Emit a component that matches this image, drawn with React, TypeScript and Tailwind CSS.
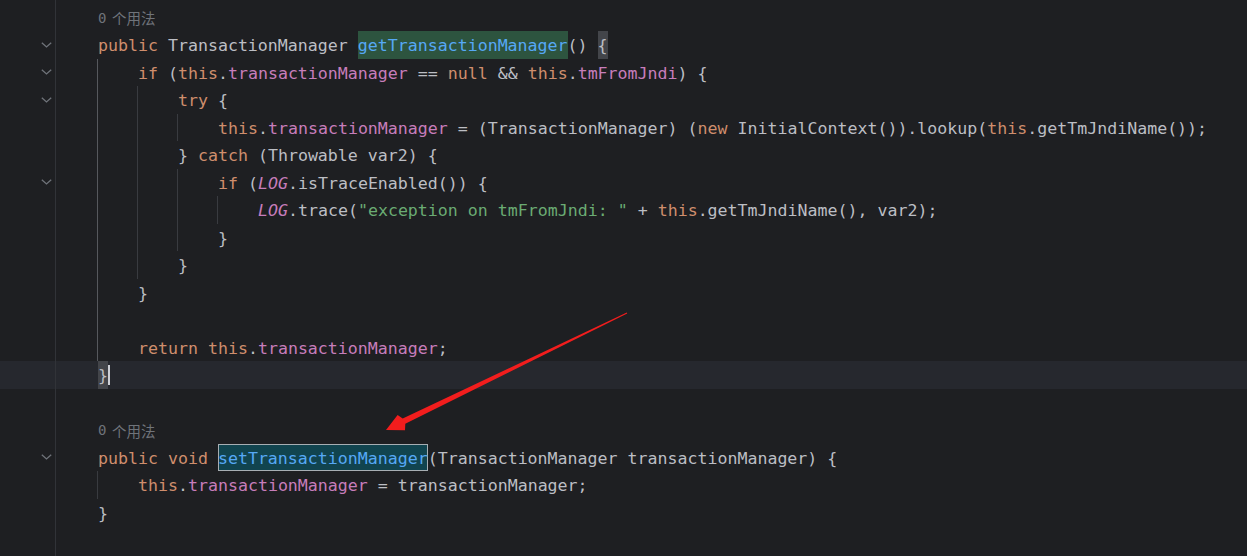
import React from "react";

type Tok = { t: string; c?: string };

interface Line {
  kind?: "hint" | "code";
  fold?: boolean;
  indent?: number;
  guides?: number[];
  bright?: boolean;
  current?: boolean;
  toks?: Tok[];
}

const KW = "text-[#cf8e6d]";
const FIELD = "text-[#c77dbb]";
const STATIC = "text-[#c77dbb] italic";
const STR = "text-[#6aab73]";

const k = (t: string): Tok => ({ t, c: KW });
const f = (t: string): Tok => ({ t, c: FIELD });
const d = (t: string): Tok => ({ t });

const lines: Line[] = [
  { kind: "hint" },
  {
    fold: true,
    toks: [
      k("public"),
      d(" TransactionManager "),
      { t: "getTransactionManager", c: "green" },
      d("() "),
      { t: "{", c: "brace" },
    ],
  },
  {
    fold: true,
    indent: 1,
    guides: [0],
    bright: true,
    toks: [
      k("if"),
      d(" ("),
      k("this"),
      d("."),
      f("transactionManager"),
      d(" == "),
      k("null"),
      d(" && "),
      k("this"),
      d("."),
      f("tmFromJndi"),
      d(") {"),
    ],
  },
  { fold: true, indent: 2, guides: [0, 1], bright: true, toks: [k("try"), d(" {")] },
  {
    indent: 3,
    guides: [0, 1, 2],
    bright: true,
    toks: [
      k("this"),
      d("."),
      f("transactionManager"),
      d(" = (TransactionManager) ("),
      k("new"),
      d(" InitialContext()).lookup("),
      k("this"),
      d(".getTmJndiName());"),
    ],
  },
  {
    indent: 2,
    guides: [0, 1],
    bright: true,
    toks: [d("} "), k("catch"), d(" (Throwable var2) {")],
  },
  {
    fold: true,
    indent: 3,
    guides: [0, 1, 2],
    bright: true,
    toks: [k("if"), d(" ("), { t: "LOG", c: STATIC }, d(".isTraceEnabled()) {")],
  },
  {
    indent: 4,
    guides: [0, 1, 2, 3],
    bright: true,
    toks: [
      { t: "LOG", c: STATIC },
      d(".trace("),
      { t: '"exception on tmFromJndi: "', c: STR },
      d(" + "),
      k("this"),
      d(".getTmJndiName(), var2);"),
    ],
  },
  { indent: 3, guides: [0, 1, 2], bright: true, toks: [d("}")] },
  { indent: 2, guides: [0, 1], bright: true, toks: [d("}")] },
  { indent: 1, guides: [0], bright: true, toks: [d("}")] },
  { indent: 1, guides: [0], bright: true, toks: [] },
  {
    indent: 1,
    guides: [0],
    bright: true,
    toks: [k("return"), d(" "), k("this"), d("."), f("transactionManager"), d(";")],
  },
  { current: true, toks: [{ t: "}", c: "caret" }] },
  { toks: [] },
  { kind: "hint" },
  {
    fold: true,
    toks: [
      k("public"),
      d(" "),
      k("void"),
      d(" "),
      { t: "setTransactionManager", c: "teal" },
      d("(TransactionManager transactionManager) {"),
    ],
  },
  {
    indent: 1,
    guides: [0],
    toks: [k("this"), d("."), f("transactionManager"), d(" = transactionManager;")],
  },
  { toks: [d("}")] },
];

function Chevron() {
  return (
    <svg width="11" height="6" viewBox="0 0 11 6" className="block">
      <polyline
        points="0.8,0.8 5.5,5 10.2,0.8"
        fill="none"
        stroke="#6f737a"
        strokeWidth="1.3"
      />
    </svg>
  );
}

function Token({ tok }: { tok: Tok }) {
  if (tok.c === "green") {
    return (
      <span className="inline-block h-[27.5px] bg-[#2d543f] text-[#56a8f5]">
        <span className="relative top-[1px]">{tok.t}</span>
      </span>
    );
  }
  if (tok.c === "teal") {
    return (
      <span className="inline-block h-[27.5px] bg-[#11444f] text-[#56a8f5] shadow-[inset_0_0_0_1px_#a7aeb3]">
        <span className="relative top-[1px]">{tok.t}</span>
      </span>
    );
  }
  if (tok.c === "brace") {
    return (
      <span className="inline-block h-[27.5px] bg-[#43454a]">
        <span className="relative top-[1px]">{tok.t}</span>
      </span>
    );
  }
  if (tok.c === "caret") {
    return (
      <span className="inline-flex h-[27.5px] items-center">
        <span className="inline-block h-[27.5px] bg-[#43454a]">
          <span className="relative top-[1px]">{tok.t}</span>
        </span>
        <span className="ml-[-0.5px] inline-block h-[20px] w-[2px] bg-[#ced0d6]" />
      </span>
    );
  }
  return <span className={`relative top-[1px] ${tok.c ?? ""}`}>{tok.t}</span>;
}

function Row({ line }: { line: Line }) {
  const indent = line.indent ?? 0;
  const guides = line.guides ?? [];
  return (
    <div className={`flex h-[27.5px] ${line.current ? "bg-[#26282e]" : ""}`}>
      <div className="flex w-[56px] shrink-0 items-center border-r border-[#313338] pl-[41px]">
        {line.fold && <Chevron />}
      </div>
      <div className="flex h-full pl-[41px]">
        {Array.from({ length: indent }).map((_, i) => {
          const on = guides.includes(i);
          const color = on
            ? i === 0 && line.bright
              ? "border-[#56585d]"
              : "border-[#393b40]"
            : "border-transparent";
          return <div key={i} className={`h-full w-[40px] border-l ${color}`} />;
        })}
        <div className="w-[1px]" />
        {line.kind === "hint" ? (
          <div className="flex items-center pt-[2px] text-[#6f737a]">
            <span className="text-[14px]">0</span>
            <span className="ml-[5.5px] font-['Noto_Sans_CJK_SC',sans-serif] text-[14.5px]">
              个用法
            </span>
          </div>
        ) : (
          <div className="whitespace-pre leading-[27.5px] text-[#bcbec4]">
            {(line.toks ?? []).map((tok, i) => (
              <Token key={i} tok={tok} />
            ))}
          </div>
        )}
      </div>
    </div>
  );
}

export default function App() {
  return (
    <div className="relative h-[556px] w-full overflow-hidden bg-[#1e1f22] font-['DejaVu_Sans_Mono',monospace] text-[16.6px]">
      <div className="flex h-full flex-col">
        <div className="flex h-[3.5px] shrink-0">
          <div className="w-[56px] border-r border-[#313338]" />
        </div>
        {lines.map((line, i) => (
          <Row key={i} line={line} />
        ))}
        <div className="flex flex-1">
          <div className="w-[56px] border-r border-[#313338]" />
        </div>
      </div>
      <svg
        className="pointer-events-none absolute left-0 top-0"
        width="1247"
        height="556"
        viewBox="0 0 1247 556"
      >
        <polygon
          points="386,430 397.6,415 402.7,418.6 626.8,312.6 627.2,313.4 405.3,423.7 405,430.2"
          fill="#f21d1d"
        />
      </svg>
    </div>
  );
}
